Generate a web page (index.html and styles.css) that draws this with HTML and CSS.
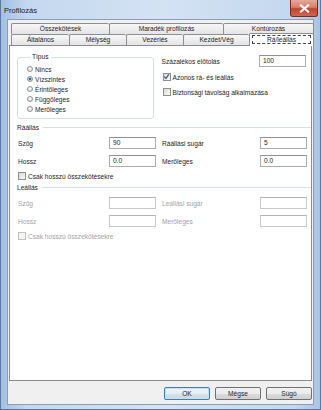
FILE: index.html
```html
<!DOCTYPE html>
<html>
<head>
	<link rel="stylesheet" href="styles.css">
</head>
<body>
	<div class="window">
		<div class="titlebar">
			<span class="title">Profilozás</span>
			<div class="close">
				<svg width="11" height="9" viewBox="0 0 11 9"><path d="M2 1.5 L9 7.5 M9 1.5 L2 7.5" stroke="#fff" stroke-width="2.2" stroke-linecap="square"/></svg>
			</div>
		</div>

		<div class="client">
			<div class="tabs">
				<div class="tabrow">
					<div class="tab w98">Összekötések</div>
					<div class="tab w114">Maradék profilozás</div>
					<div class="tab grow">Kontúrozás</div>
				</div>
				<div class="tabrow">
					<div class="tab w58">Általános</div>
					<div class="tab w57">Mélység</div>
					<div class="tab w57">Vezérlés</div>
					<div class="tab w66">Kezdet/Vég</div>
					<div class="tab grow active"><span class="focus">Rá/leállás</span></div>
				</div>
			</div>

			<div class="panel">
				<div class="top">
					<fieldset class="group">
						<legend>Típus</legend>
						<div class="radio"><span class="dot"></span>Nincs</div>
						<div class="radio"><span class="dot on"></span>Vízszintes</div>
						<div class="radio"><span class="dot"></span>Érintőleges</div>
						<div class="radio"><span class="dot"></span>Függőleges</div>
						<div class="radio"><span class="dot"></span>Merőleges</div>
					</fieldset>
					<div class="side">
						<div class="field">
							<span>Százalékos előtolás</span>
							<div class="input">100</div>
						</div>
						<div class="check">
							<span class="box">
								<svg width="7" height="7" viewBox="0 0 7 7"><path d="M1.2 3.6 L2.9 5.4 L5.9 1.3" fill="none" stroke="#4a5f8f" stroke-width="1.3"/></svg>
							</span>Azonos rá- és leállás
						</div>
						<div class="check"><span class="box"></span>Biztonsági távolság alkalmazása</div>
					</div>
				</div>

				<div class="sep"><span>Ráállás</span></div>
				<div class="fields">
					<div class="field left"><span>Szög</span><div class="input">90</div></div>
					<div class="field"><span>Ráállási sugár</span><div class="input">5</div></div>
					<div class="field left"><span>Hossz</span><div class="input">0.0</div></div>
					<div class="field"><span>Merőleges</span><div class="input">0.0</div></div>
				</div>
				<div class="check low"><span class="box"></span>Csak hosszú összekötésekre</div>

				<div class="sep sep2"><span>Leállás</span></div>
				<div class="fields disabled">
					<div class="field left"><span>Szög</span><div class="input"></div></div>
					<div class="field"><span>Leállási sugár</span><div class="input"></div></div>
					<div class="field left"><span>Hossz</span><div class="input"></div></div>
					<div class="field"><span>Merőleges</span><div class="input"></div></div>
				</div>
				<div class="check low disabled"><span class="box"></span>Csak hosszú összekötésekre</div>
			</div>

			<div class="buttons">
				<div class="btn default">OK</div>
				<div class="btn">Mégse</div>
				<div class="btn">Súgó</div>
			</div>
		</div>
	</div>
</body>
</html>
```

FILE: styles.css
```css
body {
	margin: 0;
	font-family: "Liberation Sans", Arial, sans-serif;
	font-size: 6.6px;
	color: #1e1e1e;
	background: #ffffff;
}

.window {
	width: 321px;
	height: 410px;
	box-sizing: border-box;
	padding: 0 6px 5px 6px;
	background: linear-gradient(90deg, #a3c0e2 0%, #c3d7ee 8%, #d4e3f4 50%, #c3d7ee 92%, #a9c4e4 100%);
	border: 1px solid #5b7aa3;
	border-top: none;
}

.titlebar {
	height: 19px;
	display: flex;
	align-items: center;
	margin-left: -3px;
	position: relative;
}

.title {
	font-size: 7.5px;
	color: #1b1b1b;
	margin-top: 1px;
}

.close {
	position: absolute;
	right: -4px;
	top: 0;
	width: 28px;
	height: 17px;
	box-sizing: border-box;
	border: 1px solid #7a2a1e;
	border-top: none;
	border-radius: 0 0 3px 3px;
	background: linear-gradient(#e8a898 0%, #d8806c 45%, #c3432b 55%, #d0684c 100%);
	display: flex;
	align-items: center;
	justify-content: center;
}

.client {
	height: 386px;
	box-sizing: border-box;
	background: #f0f0f0;
	border: 1px solid #8a9eb8;
	padding: 3px 1px 0 1px;
}

/* tabs */
.tabs {
	margin-left: 2px;
	width: 303px;
}

.tabrow {
	display: flex;
	height: 11px;
}

.tab {
	box-sizing: border-box;
	height: 11px;
	border: 1px solid #8c8e94;
	border-bottom: none;
	border-right: none;
	border-radius: 2px 2px 0 0;
	background: linear-gradient(#f7f7f7, #e4e4e4);
	text-align: center;
	line-height: 10px;
	color: #1e1e1e;
}

.tab.grow {
	flex: 1;
	border-right: 1px solid #8c8e94;
}

.w98 { width: 98px; }
.w114 { width: 114px; }
.w58 { width: 58px; }
.w57 { width: 57px; }
.w66 { width: 66px; }

.tab.active {
	background: #ffffff;
	height: 13px;
	margin-top: -1px;
	margin-bottom: -1px;
	position: relative;
	z-index: 1;
	padding: 1px 2px 0 2px;
	line-height: 9px;
}

.focus {
	display: block;
	border: 1px dashed #444;
	height: 9px;
	box-sizing: border-box;
	line-height: 7px;
}

/* panel */
.panel {
	height: 336px;
	box-sizing: border-box;
	background: #ffffff;
	border: 1px solid #898c95;
	padding: 7px 5px 0 7px;
}

.top {
	display: flex;
	gap: 8px;
}

.group {
	margin: 0;
	width: 137px;
	box-sizing: border-box;
	border: 1px solid #d5dfe5;
	border-radius: 3px;
	padding: 3px 0 4px 9px;
}

.group legend {
	padding: 0 2px;
	margin-left: 3px;
	line-height: 8px;
	color: #1e1e1e;
}

.radio {
	display: flex;
	align-items: center;
	height: 10px;
}

.dot {
	width: 6px;
	height: 6px;
	box-sizing: border-box;
	border-radius: 50%;
	border: 1px solid #8e8f8f;
	background: radial-gradient(circle at 40% 35%, #ffffff, #d4d4d4);
	margin-right: 2px;
}

.dot.on {
	background: radial-gradient(circle, #1d5a8c 0%, #3a7fb5 45%, #dfe7ef 60%, #ffffff 100%);
}

.side {
	width: 145px;
	padding-top: 2px;
}

.field {
	display: flex;
	align-items: center;
	justify-content: space-between;
	height: 12px;
}

.input {
	width: 47px;
	height: 12px;
	box-sizing: border-box;
	border: 1px solid #abadb3;
	border-top-color: #8e9299;
	background: #fff;
	padding-left: 3px;
	line-height: 10px;
}

.check {
	display: flex;
	align-items: center;
	height: 10px;
	margin-top: 5px;
	margin-left: 1px;
}

.box {
	width: 6px;
	height: 6px;
	border: 1px solid #8e8f8f;
	background: linear-gradient(135deg, #d8d8d8, #fbfbfb);
	margin-right: 2px;
	display: flex;
}

.box svg {
	margin: -1px 0 0 -1px;
}

.sep {
	display: flex;
	align-items: center;
	height: 8px;
	margin-top: 4px;
	margin-right: -5px;
}

.sep::after {
	content: "";
	flex: 1;
	height: 1px;
	background: #d5dfe5;
	margin-left: 4px;
}

.sep2 {
	margin-top: 2px;
}

.fields {
	display: grid;
	grid-template-columns: 139px 145px;
	column-gap: 6px;
	row-gap: 6px;
	margin-top: 6px;
}

.field.left span {
	padding-left: 1px;
}

.check.low {
	margin-top: 4px;
}

.disabled {
	color: #a3a3a3;
}

.disabled .input {
	border-color: #c6c8cc;
	border-top-color: #b0b3b8;
}

.disabled .box {
	border-color: #c0c0c0;
	background: #f4f4f4;
}

/* buttons */
.buttons {
	display: flex;
	justify-content: flex-end;
	gap: 5px;
	margin-top: 6px;
	margin-right: 0;
}

.btn {
	width: 46px;
	height: 13px;
	box-sizing: border-box;
	border: 1px solid #707070;
	border-radius: 2px;
	background: linear-gradient(#f2f2f2 0%, #ebebeb 50%, #dddddd 51%, #cfcfcf 100%);
	text-align: center;
	line-height: 11px;
}

.btn.default {
	border-color: #3c7fb1;
	background: linear-gradient(#eef3f7 0%, #e6edf2 50%, #d7e1e8 51%, #cbd8e2 100%);
	box-shadow: inset 0 0 0 1px #c3e2f6;
}
```
